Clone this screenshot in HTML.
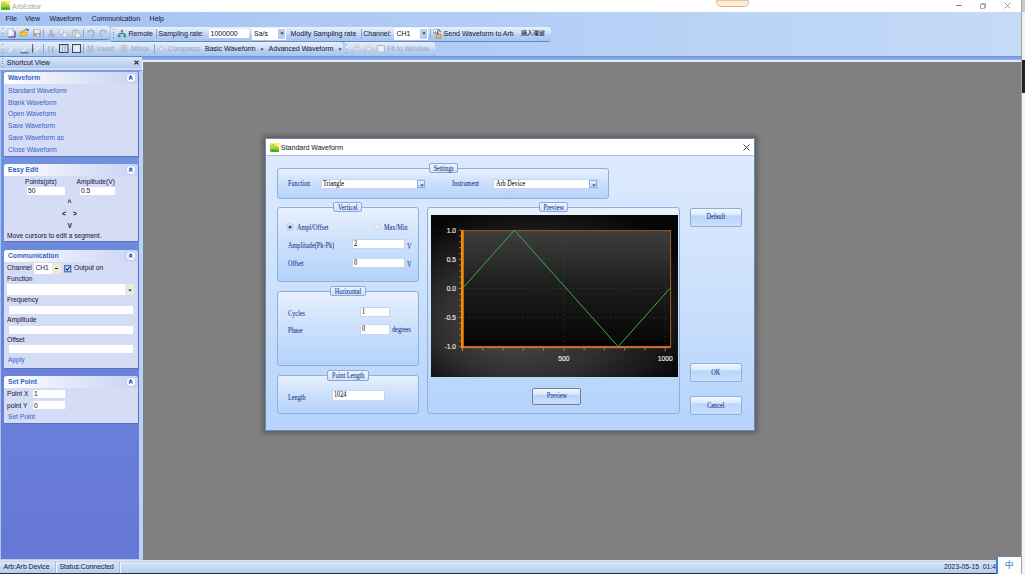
<!DOCTYPE html>
<html><head><meta charset="utf-8">
<style>
*{box-sizing:border-box;margin:0;padding:0}
html,body{width:1025px;height:574px;overflow:hidden;background:#fff;font-family:"Liberation Sans",sans-serif;font-size:7px;color:#1a2038}
.a{position:absolute}
.t{position:absolute;white-space:pre;line-height:1;-webkit-text-stroke:0.04px currentColor}
/* title */
#title{left:0;top:0;width:1021px;height:12px;background:#fff}
/* menu + toolbar area */
#bars{left:0;top:12px;width:1021px;height:49px;background:linear-gradient(#b4cdf5 0,#a5c2f1 1.5px,#a5c2f1 100%);}
#bars2{left:0;top:0;width:1021px;height:44px;background:linear-gradient(90deg,rgba(255,255,255,0) 0%,rgba(185,212,248,.6) 45%,rgba(196,218,247,1) 100%)}
.strip{position:absolute;border-radius:0 3px 3px 0;background:linear-gradient(#e8f0fc 0%,#d0e1f8 40%,#b8d0f3 60%,#a8c4ee 100%);border-bottom:1px solid #6485c6}
.grip{position:absolute;width:1.3px;background:repeating-linear-gradient(#6680b4 0 0.9px,#eef4fd 0.9px 1.5px,transparent 1.5px 2.6px)}
.sep{position:absolute;width:1.2px;background:linear-gradient(90deg,#8ba6d6 0 0.7px,rgba(240,246,254,.7) 0.7px)}
.ico{position:absolute}
.dis{color:#9aa6bb}
#mdi{left:143px;top:62px;width:878px;height:498px;background:#808080}
#left{left:0;top:57px;width:142px;height:503px;background:linear-gradient(#7b9fe4 0%,#6d8bdd 40%,#6679d6 100%);border-left:2px solid #a9c6f1;border-right:3px solid #b4cdf2}
.box{position:absolute;left:4px;width:134px;font-size:6.65px;background:#d5ddf6;border-radius:3px 3px 0 0;box-shadow:1px 1px 0 #5a6fc0}
.bh{position:absolute;left:0;top:0;width:100%;height:12px;border-radius:3px 3px 0 0;background:linear-gradient(90deg,#ffffff 0%,#e6ebfb 45%,#c8d4f3 100%)}
.bt{position:absolute;left:4px;font-weight:bold;color:#3462cc;font-size:6.7px;-webkit-text-stroke:0}
.coll{position:absolute;right:3.5px;top:2.4px;width:7.4px;height:7.4px;border-radius:50%;background:#fff;box-shadow:0 0 0 0.6px #b8c6ec}
.coll svg{position:absolute;left:0;top:0}
.box .t:not(.bt){margin-top:0.3px}
.lk{color:#4067c8;-webkit-text-stroke:0.05px currentColor}
.inp{position:absolute;background:#fff}
#status{left:0;top:560px;width:1021px;height:14px;background:linear-gradient(#e2ecfb 0%,#c9dbf6 40%,#b1caf0 100%);border-top:1px solid #d8e4f8}
/* dialog */
#dlg{left:265px;top:138px;width:490px;height:293px;box-shadow:0 0 5px 2px rgba(30,30,30,.4);background:linear-gradient(#dfebfd 0%,#cfe2fc 45%,#b5d3fb 100%);border:1px solid #6f89b0}
#dlgt{left:0;top:0;width:488px;height:17px;background:#fff;border-bottom:1px solid #a8c2e8}
.serif{font-family:"Liberation Serif",serif;color:#22398c;font-size:7.8px;transform:scaleX(0.8);transform-origin:0 50%;-webkit-text-stroke:0.08px currentColor}
.ink{color:#151515}
.ct{position:absolute;left:0;width:125%;text-align:center;white-space:pre;line-height:1}
.grp{position:absolute;border:1px solid #8db0de;border-radius:3px;background:linear-gradient(#e8f1fd 0%,#d3e4fc 35%,#b4d2fb 100%)}
.cap{position:absolute;height:11px;border:1px solid #86a9dc;border-radius:2px;background:linear-gradient(#eef5fe,#cfe1fb)}
.btn{position:absolute;border:1px solid #92afd9;border-radius:2px;background:linear-gradient(#f3f8fe 0%,#dbe9fc 35%,#b9d5fb 40%,#c9defc 100%)}
.dinp{position:absolute;background:#fff;border:1px solid #c4d6ee}
.ddb{position:absolute;right:0;top:0;width:8px;height:100%;border:1px solid #8fb0df;background:linear-gradient(#e6effc,#b9d3f6)}

.def{border-color:#6f7f95}
</style></head><body>

<!-- TITLE BAR -->
<div id="title" class="a">
  <svg class="a" style="left:1px;top:1px" width="9" height="9" viewBox="0 0 9 9">
      <defs><linearGradient id="ig1" x1="0" y1="0" x2="0" y2="1"><stop offset="0" stop-color="#c8f860"/><stop offset="1" stop-color="#48c020"/></linearGradient></defs>
      <rect width="9" height="9" fill="#fbf35a"/>
      <path d="M0 3.4L3 1.1L6 3.7L9 5.1V9H0Z" fill="url(#ig1)"/>
      <path d="M0.6 9V6.2L1.8 8.4L3.2 5.8L4.6 8.4L5.8 6L7.2 8.4L8.4 6.2V9Z" fill="#2f9a1a"/>
      <path d="M1.2 9V7.8M4 9V7.8M6.7 9V7.8" stroke="#f2a030" stroke-width="1.1"/>
      <path d="M0 3.4L3 1.1L6 3.7L9 5.1" stroke="#e86848" stroke-width="0.9" fill="none" stroke-dasharray="0.9 0.6"/>
    </svg>
  <div class="t" style="left:12px;top:2.6px;color:#a2a2a2;font-size:7px;-webkit-text-stroke:0">ArbEditor</div>
  <div class="a" style="left:716px;top:-3px;width:33px;height:10px;border-radius:5px;background:linear-gradient(#e8c8a8 0,#e8c8a8 3.5px,#fdecd4 3.5px);border:0.8px solid #e0b390"></div>
  <div class="a" style="left:956px;top:5px;width:6px;height:0.8px;background:#8a8a8a"></div>
  <svg class="a" style="left:979px;top:2px" width="8" height="7" viewBox="0 0 8 7"><path d="M1.5 2.5h4v4h-4z M2.5 2.5V1.5h4v4h-1" fill="none" stroke="#8a8a8a" stroke-width="0.7"/></svg>
  <svg class="a" style="left:1004px;top:2px" width="7" height="7" viewBox="0 0 7 7"><path d="M0.5 0.5L6.5 6.5M6.5 0.5L0.5 6.5" stroke="#7a7a7a" stroke-width="0.7"/></svg>
</div>
<div class="a" style="left:1021px;top:0;width:1px;height:574px;background:#9aa89e"></div>
<div class="a" style="left:1022px;top:0;width:3px;height:574px;background:#f2f2f2"></div>
<div class="a" style="left:1022px;top:0;width:3px;height:12px;background:#c8c8c8"></div>
<div class="a" style="left:1022px;top:60px;width:3px;height:33px;background:#1f2229"></div>

<!-- MENU/TOOLBAR -->
<div id="bars" class="a"><div id="bars2" class="a"></div>
  <div class="t" style="left:5.6px;top:3.1px">File</div>
  <div class="t" style="left:25px;top:3.1px">View</div>
  <div class="t" style="left:49.6px;top:3.1px">Waveform</div>
  <div class="t" style="left:91.4px;top:3.1px">Communication</div>
  <div class="t" style="left:149.6px;top:3.1px">Help</div>
</div>

<!-- toolbar row 1 strip 1 -->
<div class="strip" style="left:0;top:26px;width:110px;height:14px"></div>
<div class="grip" style="left:2px;top:28px;height:10px"></div>
<!-- toolbar row 1 strip 2 -->
<div class="strip" style="left:111px;top:27px;width:440px;height:14.6px"></div>
<div class="grip" style="left:113px;top:29px;height:10px"></div>
<div class="t" style="left:128.4px;top:29.9px">Remote</div>
<div class="sep" style="left:156px;top:29px;height:10px"></div>
<div class="t" style="left:158.6px;top:29.9px">Sampling rate:</div>
<div class="inp" style="left:209px;top:29.4px;width:40px;height:8.5px"></div>
<div class="t" style="left:210.5px;top:29.9px">1000000</div>
<div class="inp" style="left:252px;top:27.6px;width:34px;height:12px"></div>
<div class="a" style="left:277.6px;top:28.6px;width:7.5px;height:10px;background:#b8cdee"></div>
<div class="t" style="left:254px;top:29.9px">Sa/s</div>
<svg class="a" style="left:279.5px;top:32.2px" width="4" height="3" viewBox="0 0 4 3"><path d="M0.3 0.5H3.7L2 2.6Z" fill="#1e2640"/></svg>
<div class="t" style="left:290.6px;top:29.9px">Modify Sampling rate</div>
<div class="sep" style="left:361px;top:29px;height:10px"></div>
<div class="t" style="left:363.2px;top:29.9px">Channel:</div>
<div class="inp" style="left:394px;top:27.6px;width:34px;height:12px"></div>
<div class="a" style="left:419.6px;top:28.6px;width:7.5px;height:10px;background:#b8cdee"></div>
<div class="t" style="left:396.5px;top:29.9px">CH1</div>
<svg class="a" style="left:421.5px;top:32.2px" width="4" height="3" viewBox="0 0 4 3"><path d="M0.3 0.5H3.7L2 2.6Z" fill="#1e2640"/></svg>
<div class="sep" style="left:430px;top:29px;height:10px"></div>
<div class="t" style="left:443.6px;top:29.9px">Send Waveform to Arb</div>
<div class="t" style="left:521.2px;top:29.8px;font-size:6.4px;color:#1c2238;-webkit-text-stroke:0.15px currentColor">插入谐波</div>

<!-- toolbar row 2 -->
<div class="strip" style="left:0;top:42px;width:343px;height:15px"></div>
<div class="grip" style="left:2px;top:44px;height:10px"></div>
<div class="t dis" style="left:97px;top:44.9px">Invert</div>
<div class="t dis" style="left:131px;top:44.9px">Mirror</div>
<div class="t dis" style="left:168px;top:44.9px">Compress</div>
<div class="t" style="left:205px;top:44.9px">Basic Waveform</div>
<div class="t" style="left:268.6px;top:44.9px">Advanced Waveform</div>
<div class="strip" style="left:345px;top:42px;width:90px;height:15px"></div>
<div class="grip" style="left:346px;top:44px;height:10px"></div>
<div class="t dis" style="left:387px;top:44.9px">Fit to Window</div>

<!-- toolbar icons -->
<svg class="a" style="left:6.5px;top:28px" width="9" height="10" viewBox="0 0 9 10">
  <defs><linearGradient id="nd" x1="0" y1="0" x2="1" y2="1"><stop offset="0" stop-color="#fff"/><stop offset="0.55" stop-color="#f4f4f4"/><stop offset="1" stop-color="#b8b8c0"/></linearGradient></defs>
  <path d="M1 0.8H5.6L8 3.2V9H1Z" fill="url(#nd)" stroke="#9a9ab8" stroke-width="0.6"/>
  <path d="M8 3.2V9H1.4" fill="none" stroke="#4a3fa8" stroke-width="1.1"/>
  <path d="M5.6 0.8V3.2H8" fill="#e8e8f0" stroke="#6a6ab0" stroke-width="0.5"/>
</svg>
<svg class="a" style="left:18.5px;top:28px" width="10" height="9" viewBox="0 0 10 9">
  <path d="M0.8 3H3.5L4.2 2H6V7.8H0.8Z" fill="#e9b21f"/>
  <path d="M0.8 7.8L2.2 4.2H8.6L7.2 7.8Z" fill="#f7cf3d" stroke="#c48a10" stroke-width="0.5"/>
  <path d="M5.5 2.2Q6.5 0.4 8.6 1.2" fill="none" stroke="#2a5ad0" stroke-width="0.9"/>
  <circle cx="8.7" cy="2" r="1.1" fill="#1f4fc8"/>
</svg>
<svg class="a" style="left:32.5px;top:29px" width="8" height="8" viewBox="0 0 8 8">
  <rect x="0.3" y="0.3" width="7.4" height="7.4" rx="0.6" fill="#9c9c9c"/>
  <rect x="1.4" y="0.6" width="5.2" height="3.6" fill="#f2f2f2"/>
  <rect x="2" y="5.3" width="4" height="2.2" fill="#e6e6e6"/>
  <rect x="2.5" y="5.6" width="1" height="1.4" fill="#555"/>
</svg>
<div class="sep" style="left:43px;top:29px;height:9px"></div>
<svg class="a" style="left:47.5px;top:28.8px" width="7" height="8.5" viewBox="0 0 7 8.5">
  <path d="M1.8 0.5L4 5.2M4.6 0.5L2.6 5.2" stroke="#9a9a9a" stroke-width="0.8" fill="none"/>
  <circle cx="1.9" cy="6.6" r="1.3" fill="none" stroke="#a0a0a0" stroke-width="0.8"/>
  <circle cx="5" cy="6.6" r="1.3" fill="none" stroke="#a0a0a0" stroke-width="0.8"/>
</svg>
<svg class="a" style="left:59px;top:29px" width="8.5" height="8.5" viewBox="0 0 8.5 8.5">
  <path d="M0.5 0.5H3.5L4.5 1.5V5H0.5Z" fill="#ececec" stroke="#b0b0b0" stroke-width="0.5"/>
  <path d="M3.8 3.4H6.8L8 4.6V8.2H3.8Z" fill="#e8e8e8" stroke="#a8a8a8" stroke-width="0.6"/>
</svg>
<svg class="a" style="left:72px;top:28.5px" width="8.5" height="9" viewBox="0 0 8.5 9">
  <rect x="0.5" y="1.2" width="6" height="6.5" fill="#d4d4d4" stroke="#a8a8a8" stroke-width="0.5"/>
  <rect x="2" y="0.4" width="3" height="1.6" fill="#b8b8b8"/>
  <path d="M3.5 3.8H6.8L8 5V8.6H3.5Z" fill="#eee" stroke="#a8a8a8" stroke-width="0.6"/>
</svg>
<div class="sep" style="left:83px;top:29px;height:9px"></div>
<svg class="a" style="left:86.5px;top:29px" width="8" height="8" viewBox="0 0 8 8">
  <path d="M1.6 2.5Q4.2 0.2 6.3 2.4Q7.8 4.6 4.8 7.6" fill="none" stroke="#aaa" stroke-width="1.4"/>
  <path d="M0.3 0.8L0.6 3.8L3.4 3.2Z" fill="#aaa"/>
</svg>
<svg class="a" style="left:98.5px;top:29px" width="8" height="8" viewBox="0 0 8 8">
  <path d="M6.4 2.5Q3.8 0.2 1.7 2.4Q0.2 4.6 3.2 7.6" fill="none" stroke="#b0b0b0" stroke-width="1.4"/>
  <path d="M7.7 0.8L7.4 3.8L4.6 3.2Z" fill="#b0b0b0"/>
</svg>
<svg class="a" style="left:116.5px;top:28.5px" width="10" height="9" viewBox="0 0 10 9">
  <path d="M5 3V4.5M2.2 6.6V4.6H7.8V6.6" fill="none" stroke="#2a55c8" stroke-width="0.9"/>
  <path d="M5 0.4L6.5 2L5 3.6L3.5 2Z" fill="#ee3a22"/>
  <circle cx="2.2" cy="7" r="1.6" fill="#28b028"/>
  <circle cx="7.8" cy="7" r="1.6" fill="#28b028"/>
</svg>
<svg class="a" style="left:432.5px;top:28.5px" width="9" height="10" viewBox="0 0 9 10">
  <rect x="0.4" y="0.8" width="4" height="4" fill="#fff" stroke="#7080a0" stroke-width="0.5"/>
  <path d="M1.2 4L2.4 2L3.6 4Z" fill="#e82a2a"/>
  <path d="M4.6 0.6Q7 0.2 7.4 3" fill="none" stroke="#2050c0" stroke-width="1"/>
  <path d="M3.2 5.2H7.8V9.3H3.2Z" fill="#f5c02a" stroke="#5a6aa0" stroke-width="0.5"/>
  <path d="M4.8 2.2V5.5" stroke="#2050c0" stroke-width="1"/>
</svg>
<!-- row 2 -->
<svg class="a" style="left:6.5px;top:45px" width="9" height="8" viewBox="0 0 9 8">
  <path d="M1 7.2L0.8 6L6.5 0.6L8.2 2.2L2.4 7.5Z" fill="#f2f2f2" stroke="#b8b8b8" stroke-width="0.5"/>
</svg>
<svg class="a" style="left:19.5px;top:45px" width="9" height="8.5" viewBox="0 0 9 8.5">
  <path d="M1.4 6.2L6.8 0.6L8.4 2.2L3 7Z" fill="#f2f2f2" stroke="#b8b8b8" stroke-width="0.5"/>
  <rect x="0.5" y="7.4" width="8" height="0.9" fill="#3a4258"/>
</svg>
<svg class="a" style="left:31.8px;top:44.2px" width="9" height="9" viewBox="0 0 9 9">
  <rect x="0.2" y="0.2" width="0.9" height="8.4" fill="#3a4258"/>
  <path d="M1.8 7.6L7 2L8.6 3.6L3.2 8.6Z" fill="#f2f2f2" stroke="#b8b8b8" stroke-width="0.5"/>
</svg>
<div class="sep" style="left:43px;top:44px;height:10px"></div>
<svg class="a" style="left:47.8px;top:45.6px" width="6" height="7" viewBox="0 0 6 7">
  <rect x="0.2" y="0.2" width="1.3" height="6.4" fill="#b4b4b4"/>
  <rect x="4" y="0.2" width="1.3" height="6.4" fill="#a8a8a8"/>
</svg>
<svg class="a" style="left:59px;top:44.2px" width="9.5" height="9" viewBox="0 0 9.5 9">
  <rect x="0.5" y="0.5" width="8.5" height="8" fill="#cfe0f6" stroke="#2c3444" stroke-width="0.9"/>
  <path d="M3.5 1V8.2M6 1V8.2" stroke="#9aa0a8" stroke-width="0.8"/>
</svg>
<svg class="a" style="left:72px;top:44.2px" width="9" height="9" viewBox="0 0 9 9">
  <rect x="0.5" y="0.5" width="8" height="8" fill="#dde7f4" stroke="#333b4c" stroke-width="0.9"/>
  <rect x="1.6" y="1.6" width="5.8" height="5.8" fill="#e6ecf4" stroke="#b8c8e0" stroke-width="0.4" stroke-dasharray="0.8 0.8"/>
</svg>
<div class="sep" style="left:83px;top:44px;height:10px"></div>
<svg class="a" style="left:85.5px;top:44.5px" width="9" height="8" viewBox="0 0 9 8">
  <g fill="none" stroke="#b4b4b4" stroke-width="0.9"><path d="M2.5 1L4.5 4L2.5 7M6.5 1L4.5 4L6.5 7M0.5 4H8.5"/><circle cx="2.5" cy="1.5" r="1"/><circle cx="6.5" cy="1.5" r="1"/><circle cx="2.5" cy="6.5" r="1"/><circle cx="6.5" cy="6.5" r="1"/></g>
</svg>
<svg class="a" style="left:120px;top:44.2px" width="8" height="9" viewBox="0 0 8 9">
  <g fill="none" stroke="#b4b4b4" stroke-width="0.9"><path d="M4 0.3V8.7"/><path d="M3.5 1.5H1.5Q0.5 2.5 1.5 3.6H3.5M3.5 5H1.5Q0.5 6 1.5 7.3H3.5M4.5 1.5H6.5Q7.5 2.5 6.5 3.6H4.5M4.5 5H6.5Q7.5 6 6.5 7.3H4.5"/></g>
</svg>
<div class="sep" style="left:154px;top:44px;height:10px"></div>
<svg class="a" style="left:156.5px;top:44.5px" width="8" height="8.5" viewBox="0 0 8 8.5">
  <g fill="#e8e8e8" stroke="#b8b8b8" stroke-width="0.5"><path d="M4 0.3L5.4 2H2.6Z"/><path d="M4 8.2L5.4 6.5H2.6Z"/><path d="M0.3 4.25L2 2.9V5.6Z"/><path d="M7.7 4.25L6 2.9V5.6Z"/></g>
  <rect x="2.8" y="3" width="2.4" height="2.5" fill="#eee" stroke="#c0c0c0" stroke-width="0.4"/>
</svg>
<svg class="a" style="left:259.5px;top:47.6px" width="4" height="3" viewBox="0 0 4 3"><path d="M0.3 0.5H3.7L2 2.6Z" fill="#2a3450"/></svg>
<svg class="a" style="left:337.5px;top:47.6px" width="4" height="3" viewBox="0 0 4 3"><path d="M0.3 0.5H3.7L2 2.6Z" fill="#2a3450"/></svg>
<svg class="a" style="left:350.5px;top:44.2px" width="9" height="9" viewBox="0 0 9 9">
  <path d="M0.8 8.2L3.6 5.4" stroke="#c8bca8" stroke-width="1.2"/>
  <circle cx="5.6" cy="3.3" r="2.6" fill="#f2f2f2" stroke="#b8b8b8" stroke-width="0.6"/>
  <path d="M4.2 3.3H7M5.6 1.9V4.7" stroke="#a8a8a8" stroke-width="0.7"/>
</svg>
<svg class="a" style="left:363px;top:44.2px" width="9" height="9" viewBox="0 0 9 9">
  <path d="M0.8 8.2L3.6 5.4" stroke="#c8bca8" stroke-width="1.2"/>
  <circle cx="5.6" cy="3.3" r="2.6" fill="#f2f2f2" stroke="#b8b8b8" stroke-width="0.6"/>
  <path d="M4.2 3.3H7" stroke="#a8a8a8" stroke-width="0.7"/>
</svg>
<svg class="a" style="left:376.5px;top:44.8px" width="8" height="7.5" viewBox="0 0 8 7.5">
  <rect x="0.5" y="0.5" width="7" height="6.5" fill="#dfe6ef" stroke="#b4b4b4" stroke-width="0.8"/>
  <rect x="1.8" y="1.8" width="4.4" height="3.9" fill="#eef2f6"/>
</svg>

<!-- bottom border of bars -->
<div class="a" style="left:142px;top:56px;width:879px;height:3.6px;background:linear-gradient(#6f95d8,#8fb3f0)"></div>
<div class="a" style="left:142px;top:59.6px;width:879px;height:2.4px;background:#e2ebf8"></div>

<!-- MDI -->
<div id="mdi" class="a"></div>

<!-- LEFT PANEL -->
<div class="a" style="left:0;top:57px;width:142px;height:11px;background:linear-gradient(#dae6f8,#b0c8ee)"></div>
<div class="grip" style="left:2px;top:58px;height:9px"></div>
<div class="t" style="left:6.8px;top:58.9px">Shortcut View</div>
<svg class="a" style="left:133.5px;top:59.6px" width="5" height="5" viewBox="0 0 5 5"><path d="M0.6 0.6L4.4 4.4M4.4 0.6L0.6 4.4" stroke="#1a1a1a" stroke-width="1.1"/></svg>
<div class="a" style="left:0;top:68px;width:142px;height:2px;background:#cfdcf5"></div>
<div class="a" style="left:0;top:70px;width:143px;height:491px;background:linear-gradient(#7598e2 0%,#6c87dc 45%,#6677d6 100%);border-left:1.8px solid #a9c6f1;border-right:4px solid #b9d2f4;border-top:2px solid #7a9be0;border-bottom:2px solid #b0cbf2"></div>

<div class="box" style="top:72px;height:84px">
  <div class="bh"></div>
  <div class="t bt" style="top:3.3px">Waveform</div>
  <div class="coll"><svg width="7.4" height="7.4" viewBox="0 0 7.4 7.4"><path d="M1.9 3.6L3.7 1.8L5.5 3.6M1.9 5.6L3.7 3.8L5.5 5.6" fill="none" stroke="#2f5cc8" stroke-width="1.05"/></svg></div>
  <div class="t lk" style="left:4px;top:16.2px">Standard Waveform</div>
  <div class="t lk" style="left:4px;top:28px">Blank Waveform</div>
  <div class="t lk" style="left:4px;top:39.1px">Open Waveform</div>
  <div class="t lk" style="left:4px;top:50.72px">Save Waveform</div>
  <div class="t lk" style="left:4px;top:62.56px">Save Waveform as</div>
  <div class="t lk" style="left:4px;top:74.4px">Close Waveform</div>
</div>

<div class="box" style="top:164px;height:77px">
  <div class="bh"></div>
  <div class="t bt" style="top:3.3px">Easy Edit</div>
  <div class="coll"><svg width="7.4" height="7.4" viewBox="0 0 7.4 7.4"><path d="M1.9 3.6L3.7 1.8L5.5 3.6M1.9 5.6L3.7 3.8L5.5 5.6" fill="none" stroke="#2f5cc8" stroke-width="1.05"/></svg></div>
  <div class="t" style="left:21px;top:14.3px">Points(pts)</div>
  <div class="t" style="left:72.5px;top:14.3px">Amplitude(V)</div>
  <div class="inp" style="left:23px;top:23px;width:38px;height:8px"></div>
  <div class="inp" style="left:76px;top:23px;width:35px;height:8px"></div>
  <div class="t" style="left:24px;top:24px">50</div>
  <div class="t" style="left:77px;top:24px">0.5</div>
  <div class="t" style="left:63.5px;top:35.8px;font-weight:bold">^</div>
  <div class="t" style="left:58px;top:47.2px;font-weight:bold">&lt;</div>
  <div class="t" style="left:69px;top:47.2px;font-weight:bold">&gt;</div>
  <div class="t" style="left:63.5px;top:58.5px;font-weight:bold">V</div>
  <div class="t" style="left:3px;top:69.1px">Move cursors to edit a segment.</div>
</div>

<div class="box" style="top:250px;height:118px">
  <div class="bh"></div>
  <div class="t bt" style="top:3.3px">Communication</div>
  <div class="coll"><svg width="7.4" height="7.4" viewBox="0 0 7.4 7.4"><path d="M1.9 3.6L3.7 1.8L5.5 3.6M1.9 5.6L3.7 3.8L5.5 5.6" fill="none" stroke="#2f5cc8" stroke-width="1.05"/></svg></div>
  <div class="t" style="left:3px;top:15.1px">Channel</div>
  <div class="inp" style="left:30px;top:13px;width:27px;height:11px"></div>
  <div class="a" style="left:48px;top:13px;width:9px;height:11px;background:#ebead6"></div>
  <div class="t" style="left:31.5px;top:15.1px">CH1</div>
<div class="a" style="left:51px;top:18.3px;width:3px;height:1.2px;background:#1e2640"></div>
  <svg class="a" style="left:60px;top:15px" width="7.5" height="7.5" viewBox="0 0 7.5 7.5"><rect x="0.5" y="0.5" width="6.5" height="6.5" fill="#5f8ee0" stroke="#4a6cb8" stroke-width="0.8"/><rect x="1.6" y="1.6" width="4.3" height="4.3" fill="#d8e6fa"/><path d="M1.9 3.7L3.2 5.1L5.7 2" fill="none" stroke="#1a2440" stroke-width="1.05"/></svg>
  <div class="t" style="left:70px;top:15.1px">Output on</div>
  <div class="t" style="left:3px;top:26.1px">Function</div>
  <div class="inp" style="left:3px;top:34px;width:127px;height:11px"></div>
  <div class="a" style="left:121.4px;top:34px;width:8.6px;height:11px;background:#ebead6"></div>
<svg class="a" style="left:124px;top:38.5px" width="4" height="3" viewBox="0 0 4 3"><path d="M0.3 0.5H3.7L2 2.6Z" fill="#1e2640"/></svg>
  <div class="t" style="left:3px;top:47.2px">Frequency</div>
  <div class="inp" style="left:4.75px;top:56px;width:124.5px;height:8px"></div>
  <div class="t" style="left:3px;top:67px">Amplitude</div>
  <div class="inp" style="left:4.75px;top:76px;width:124.5px;height:8px"></div>
  <div class="t" style="left:3px;top:86.4px">Offset</div>
  <div class="inp" style="left:4.75px;top:95.4px;width:124.5px;height:8px"></div>
  <div class="t lk" style="left:4px;top:107.2px">Apply</div>
</div>

<div class="box" style="top:376px;height:47px">
  <div class="bh"></div>
  <div class="t bt" style="top:3.3px">Set Point</div>
  <div class="coll"><svg width="7.4" height="7.4" viewBox="0 0 7.4 7.4"><path d="M1.9 3.6L3.7 1.8L5.5 3.6M1.9 5.6L3.7 3.8L5.5 5.6" fill="none" stroke="#2f5cc8" stroke-width="1.05"/></svg></div>
  <div class="t" style="left:3px;top:14.7px">Point X</div>
  <div class="inp" style="left:29px;top:14px;width:32px;height:8px"></div>
  <div class="t" style="left:30px;top:14.9px">1</div>
  <div class="t" style="left:3px;top:26.5px">point Y</div>
  <div class="inp" style="left:29px;top:25px;width:32px;height:8px"></div>
  <div class="t" style="left:30px;top:26.5px">0</div>
  <div class="t lk" style="left:4px;top:37.8px">Set Point</div>
</div>

<!-- STATUS -->
<div id="status" class="a">
  <div class="a" style="left:0;top:0;width:1021px;height:1px;background:#c8d4e6"></div>
  <div class="a" style="left:55px;top:1px;width:1.6px;height:12px;background:linear-gradient(90deg,#aebdd2 0 0.8px,#f4f8fe 0.8px)"></div>
  <div class="a" style="left:119px;top:1px;width:1.6px;height:12px;background:linear-gradient(90deg,#aebdd2 0 0.8px,#f4f8fe 0.8px)"></div>
  <div class="t" style="left:3.5px;top:2.6px;font-size:6.85px">Arb:Arb Device</div>
  <div class="t" style="left:59.5px;top:2.6px;font-size:6.85px">Status:Connected</div>
  <div class="t" style="left:944px;top:2.6px;-webkit-text-stroke:0;font-size:6.85px">2023-05-15  01:4</div>
</div>
<div class="a" style="left:0;top:573px;width:1021px;height:1px;background:#2a2f3a"></div>
<div class="a" style="left:996px;top:557px;width:2px;height:17px;background:#2b8ce0"></div>
<div class="a" style="left:998px;top:557px;width:23px;height:17px;background:#fdfdfd"></div>
<div class="t" style="left:1004.5px;top:561px;font-size:8.6px;color:#2e7fd0;-webkit-text-stroke:0.1px currentColor">中</div>

<!-- DIALOG -->
<div id="dlg" class="a">
  <div id="dlgt" class="a">
    <svg class="a" style="left:4px;top:4px" width="9" height="9" viewBox="0 0 9 9">
      <defs><linearGradient id="ig4" x1="0" y1="0" x2="0" y2="1"><stop offset="0" stop-color="#c8f860"/><stop offset="1" stop-color="#48c020"/></linearGradient></defs>
      <rect width="9" height="9" fill="#fbf35a"/>
      <path d="M0 3.4L3 1.1L6 3.7L9 5.1V9H0Z" fill="url(#ig4)"/>
      <path d="M0.6 9V6.2L1.8 8.4L3.2 5.8L4.6 8.4L5.8 6L7.2 8.4L8.4 6.2V9Z" fill="#2f9a1a"/>
      <path d="M1.2 9V7.8M4 9V7.8M6.7 9V7.8" stroke="#f2a030" stroke-width="1.1"/>
      <path d="M0 3.4L3 1.1L6 3.7L9 5.1" stroke="#e86848" stroke-width="0.9" fill="none" stroke-dasharray="0.9 0.6"/>
    </svg>
    <div class="t" style="left:15px;top:5px;font-size:7px;color:#222">Standard Waveform</div>
    <svg class="a" style="left:477px;top:5px" width="7" height="7" viewBox="0 0 7 7"><path d="M0.5 0.5L6.5 6.5M6.5 0.5L0.5 6.5" stroke="#222" stroke-width="0.9"/></svg>
  </div>
<!--DLG-START-->
<div class="grp" style="left:11px;top:29px;width:332px;height:31px"></div>
<div class="cap" style="left:162.6px;top:24px;width:29.4px;height:10.4px"><span class="ct serif" style="top:1.0px">Settings</span></div>
<div class="t serif" style="left:21.8px;top:41.2px;">Function</div>
<div class="dinp" style="left:54.6px;top:39.7px;width:105.6px;height:10.4px"><span class="t serif ink" style="left:1.5px;top:0.3px">Triangle</span><div class="ddb"><svg class="a" style="left:1.6px;top:3px" width="4" height="3" viewBox="0 0 4 3"><path d="M0.2 0.4H3.8L2 2.6Z" fill="#1e3a8a"/></svg></div></div>
<div class="t serif" style="left:186px;top:41.2px;">Instrument</div>
<div class="dinp" style="left:227px;top:39.7px;width:105px;height:10.4px"><span class="t serif ink" style="left:1.5px;top:0.3px">Arb Device</span><div class="ddb"><svg class="a" style="left:1.6px;top:3px" width="4" height="3" viewBox="0 0 4 3"><path d="M0.2 0.4H3.8L2 2.6Z" fill="#1e3a8a"/></svg></div></div>
<div class="grp" style="left:11px;top:68px;width:141.6px;height:75px"></div>
<div class="cap" style="left:67px;top:63px;width:29.4px;height:10.4px"><span class="ct serif" style="top:1.0px">Vertical</span></div>
<div class="t serif" style="left:21.8px;top:102.7px;">Amplitude(Pk-Pk)</div>
<div class="dinp" style="left:86.3px;top:99.7px;width:53.1px;height:10.7px"><span class="t serif ink" style="left:1px;top:0.15px">2</span></div>
<div class="t serif" style="left:141px;top:103.7px;">V</div>
<div class="t serif" style="left:21.8px;top:121.2px;">Offset</div>
<div class="dinp" style="left:86.3px;top:118.6px;width:53.1px;height:10.4px"><span class="t serif ink" style="left:1px;top:-0.0px">0</span></div>
<div class="t serif" style="left:141px;top:122.2px;">V</div>
<svg class="a" style="left:20.2px;top:84.3px" width="8" height="8" viewBox="0 0 8 8"><defs><radialGradient id="rg" cx="0.4" cy="0.35" r="0.7"><stop offset="0" stop-color="#ffffff"/><stop offset="1" stop-color="#d4e0ee"/></radialGradient></defs><circle cx="4" cy="4" r="3.3" fill="url(#rg)" stroke="#a8b8cc" stroke-width="0.7"/><circle cx="4" cy="4" r="1.6" fill="#2a3f78"/></svg>
<svg class="a" style="left:107.4px;top:84.3px" width="8" height="8" viewBox="0 0 8 8"><circle cx="4" cy="4" r="3.3" fill="#e8eef6" stroke="#c4ccd8" stroke-width="0.7"/><circle cx="4" cy="4" r="2" fill="none" stroke="#d8dee8" stroke-width="0.6"/></svg>
<div class="t serif" style="left:30.6px;top:84.7px;">Ampl/Offset</div>
<div class="t serif" style="left:117.5px;top:84.7px;">Max/Min</div>
<div class="grp" style="left:11px;top:152px;width:141.6px;height:74.6px"></div>
<div class="cap" style="left:64px;top:147px;width:36px;height:10.4px"><span class="ct serif" style="top:1.0px">Horizontal</span></div>
<div class="t serif" style="left:21.8px;top:170.6px;">Cycles</div>
<div class="dinp" style="left:94px;top:167.6px;width:29.6px;height:10.4px"><span class="t serif ink" style="left:1px;top:-0.0px">1</span></div>
<div class="t serif" style="left:21.8px;top:188.2px;">Phase</div>
<div class="dinp" style="left:94px;top:185px;width:29.6px;height:11px"><span class="t serif ink" style="left:1px;top:0.3px">0</span></div>
<div class="t serif" style="left:126px;top:187.2px;">degrees</div>
<div class="grp" style="left:11px;top:236px;width:141.6px;height:39.4px"></div>
<div class="cap" style="left:61px;top:231px;width:42.4px;height:10.6px"><span class="ct serif" style="top:1.1px">Point Length</span></div>
<div class="t serif" style="left:21.6px;top:254.6px;">Length</div>
<div class="dinp" style="left:65.6px;top:251.4px;width:53.8px;height:10.6px"><span class="t serif ink" style="left:1px;top:0.1px">1024</span></div>
<div class="grp" style="left:161px;top:68.4px;width:253.2px;height:207.0px"></div>
<div class="cap" style="left:273px;top:63px;width:29.4px;height:10.4px"><span class="ct serif" style="top:1.0px">Preview</span></div>
<div class="btn def" style="left:265.6px;top:248.6px;width:49.8px;height:17.0px"><span class="ct serif" style="top:3.6px">Preview</span></div>
<div class="btn " style="left:424px;top:69px;width:51.6px;height:18.6px"><span class="ct serif" style="top:4.4px">Default</span></div>
<div class="btn " style="left:424px;top:224.4px;width:51.6px;height:18.2px"><span class="ct serif" style="top:4.2px">OK</span></div>
<div class="btn " style="left:424px;top:257.4px;width:51.6px;height:18.2px"><span class="ct serif" style="top:4.2px">Cancel</span></div>
<!--DLG-END-->
</div>
<svg class="a" style="left:431px;top:215px" width="247" height="162" viewBox="0 0 247 162">
<defs><radialGradient id="og" cx="0.45" cy="0.6" r="0.68" fx="0.3" fy="0.72"><stop offset="0" stop-color="#4a4a4a"/><stop offset="0.5" stop-color="#303030"/><stop offset="0.8" stop-color="#181818"/><stop offset="1" stop-color="#060606"/></radialGradient>
<linearGradient id="pg" x1="0" y1="0" x2="0" y2="1"><stop offset="0" stop-color="#3e3e3e"/><stop offset="0.5" stop-color="#1c1c1c"/><stop offset="1" stop-color="#040404"/></linearGradient></defs>
<rect width="247" height="162" fill="url(#og)"/>
<rect x="31" y="15.5" width="208.5" height="116.5" fill="url(#pg)"/>
<line x1="33" y1="44.30" x2="239" y2="44.30" stroke="#5a5a5a" stroke-width="0.7" stroke-dasharray="0.8 3.4"/>
<line x1="33" y1="73.40" x2="239" y2="73.40" stroke="#5a5a5a" stroke-width="0.7" stroke-dasharray="0.8 3.4"/>
<line x1="33" y1="102.50" x2="239" y2="102.50" stroke="#5a5a5a" stroke-width="0.7" stroke-dasharray="0.8 3.4"/>
<line x1="132.85" y1="16" x2="132.85" y2="131" stroke="#5a5a5a" stroke-width="0.7" stroke-dasharray="0.8 3.4"/>
<line x1="234.20" y1="16" x2="234.20" y2="131" stroke="#5a5a5a" stroke-width="0.7" stroke-dasharray="0.8 3.4"/>
<line x1="31" y1="15.6" x2="239.8" y2="15.6" stroke="#9a5a22" stroke-width="0.9"/>
<line x1="33" y1="15.6" x2="239" y2="15.6" stroke="#888" stroke-width="0.6" stroke-dasharray="0.8 3.4"/>
<line x1="239.6" y1="15.2" x2="239.6" y2="133" stroke="#b4662a" stroke-width="0.9"/>
<line x1="27.6" y1="131.60" x2="30.5" y2="131.60" stroke="#9a9a9a" stroke-width="0.8"/>
<line x1="28.4" y1="125.78" x2="30.5" y2="125.78" stroke="#9a9a9a" stroke-width="0.8"/>
<line x1="28.4" y1="119.96" x2="30.5" y2="119.96" stroke="#9a9a9a" stroke-width="0.8"/>
<line x1="28.4" y1="114.14" x2="30.5" y2="114.14" stroke="#9a9a9a" stroke-width="0.8"/>
<line x1="28.4" y1="108.32" x2="30.5" y2="108.32" stroke="#9a9a9a" stroke-width="0.8"/>
<line x1="27.6" y1="102.50" x2="30.5" y2="102.50" stroke="#9a9a9a" stroke-width="0.8"/>
<line x1="28.4" y1="96.68" x2="30.5" y2="96.68" stroke="#9a9a9a" stroke-width="0.8"/>
<line x1="28.4" y1="90.86" x2="30.5" y2="90.86" stroke="#9a9a9a" stroke-width="0.8"/>
<line x1="28.4" y1="85.04" x2="30.5" y2="85.04" stroke="#9a9a9a" stroke-width="0.8"/>
<line x1="28.4" y1="79.22" x2="30.5" y2="79.22" stroke="#9a9a9a" stroke-width="0.8"/>
<line x1="27.6" y1="73.40" x2="30.5" y2="73.40" stroke="#9a9a9a" stroke-width="0.8"/>
<line x1="28.4" y1="67.58" x2="30.5" y2="67.58" stroke="#9a9a9a" stroke-width="0.8"/>
<line x1="28.4" y1="61.76" x2="30.5" y2="61.76" stroke="#9a9a9a" stroke-width="0.8"/>
<line x1="28.4" y1="55.94" x2="30.5" y2="55.94" stroke="#9a9a9a" stroke-width="0.8"/>
<line x1="28.4" y1="50.12" x2="30.5" y2="50.12" stroke="#9a9a9a" stroke-width="0.8"/>
<line x1="27.6" y1="44.30" x2="30.5" y2="44.30" stroke="#9a9a9a" stroke-width="0.8"/>
<line x1="28.4" y1="38.48" x2="30.5" y2="38.48" stroke="#9a9a9a" stroke-width="0.8"/>
<line x1="28.4" y1="32.66" x2="30.5" y2="32.66" stroke="#9a9a9a" stroke-width="0.8"/>
<line x1="28.4" y1="26.84" x2="30.5" y2="26.84" stroke="#9a9a9a" stroke-width="0.8"/>
<line x1="28.4" y1="21.02" x2="30.5" y2="21.02" stroke="#9a9a9a" stroke-width="0.8"/>
<line x1="27.6" y1="15.20" x2="30.5" y2="15.20" stroke="#9a9a9a" stroke-width="0.8"/>
<line x1="31.50" y1="132.5" x2="31.50" y2="136.2" stroke="#9a9a9a" stroke-width="0.8"/>
<line x1="51.77" y1="132.5" x2="51.77" y2="135.5" stroke="#9a9a9a" stroke-width="0.8"/>
<line x1="72.04" y1="132.5" x2="72.04" y2="135.5" stroke="#9a9a9a" stroke-width="0.8"/>
<line x1="92.31" y1="132.5" x2="92.31" y2="135.5" stroke="#9a9a9a" stroke-width="0.8"/>
<line x1="112.58" y1="132.5" x2="112.58" y2="135.5" stroke="#9a9a9a" stroke-width="0.8"/>
<line x1="132.85" y1="132.5" x2="132.85" y2="136.2" stroke="#9a9a9a" stroke-width="0.8"/>
<line x1="153.12" y1="132.5" x2="153.12" y2="135.5" stroke="#9a9a9a" stroke-width="0.8"/>
<line x1="173.39" y1="132.5" x2="173.39" y2="135.5" stroke="#9a9a9a" stroke-width="0.8"/>
<line x1="193.66" y1="132.5" x2="193.66" y2="135.5" stroke="#9a9a9a" stroke-width="0.8"/>
<line x1="213.93" y1="132.5" x2="213.93" y2="135.5" stroke="#9a9a9a" stroke-width="0.8"/>
<line x1="234.20" y1="132.5" x2="234.20" y2="136.2" stroke="#9a9a9a" stroke-width="0.8"/>
<rect x="30" y="15.2" width="2.7" height="117.6" fill="#ff8a00"/>
<rect x="30" y="131" width="209.8" height="2.2" fill="#c96a2a"/>
<rect x="30" y="131" width="2.7" height="2.2" fill="#ff8a00"/>
<polyline points="31.50,73.40 83.39,15.20 187.17,131.60 238.86,73.40" fill="none" stroke="#3cb43c" stroke-width="1.0"/>
<text x="25" y="17.50" text-anchor="end" font-family="Liberation Sans" font-size="6.7" fill="#f2f2f2" stroke="#f2f2f2" stroke-width="0.12">1.0</text>
<text x="25" y="46.60" text-anchor="end" font-family="Liberation Sans" font-size="6.7" fill="#f2f2f2" stroke="#f2f2f2" stroke-width="0.12">0.5</text>
<text x="25" y="75.70" text-anchor="end" font-family="Liberation Sans" font-size="6.7" fill="#f2f2f2" stroke="#f2f2f2" stroke-width="0.12">0.0</text>
<text x="25" y="104.80" text-anchor="end" font-family="Liberation Sans" font-size="6.7" fill="#f2f2f2" stroke="#f2f2f2" stroke-width="0.12">-0.5</text>
<text x="25" y="133.90" text-anchor="end" font-family="Liberation Sans" font-size="6.7" fill="#f2f2f2" stroke="#f2f2f2" stroke-width="0.12">-1.0</text>
<text x="132.85" y="146.2" text-anchor="middle" font-family="Liberation Sans" font-size="6.7" fill="#f2f2f2" stroke="#f2f2f2" stroke-width="0.12">500</text>
<text x="234.20" y="146.2" text-anchor="middle" font-family="Liberation Sans" font-size="6.7" fill="#f2f2f2" stroke="#f2f2f2" stroke-width="0.12">1000</text>
</svg>
</body></html>
